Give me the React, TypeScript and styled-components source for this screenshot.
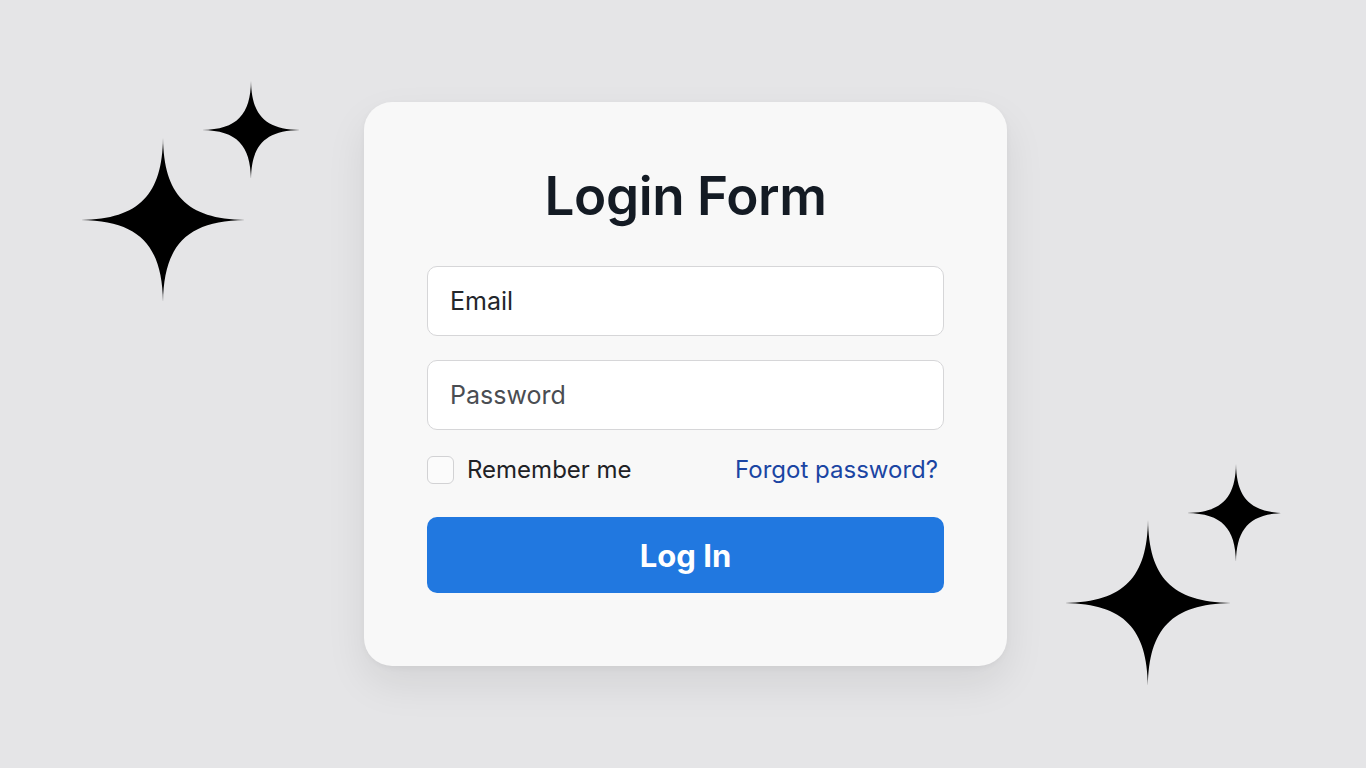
import React from 'react';
import styled, { createGlobalStyle } from 'styled-components';

const GlobalStyle = createGlobalStyle`
  html, body {
    margin: 0;
    padding: 0;
    background: #e5e5e7;
    font-family: Inter, "Noto Sans", sans-serif;
  }
`;

const Page = styled.div`
  position: relative;
  width: 100vw;
  height: 100vh;
  display: flex;
  align-items: center;
  justify-content: center;
  overflow: hidden;
`;

const Card = styled.div`
  width: 643px;
  height: 564px;
  box-sizing: border-box;
  margin-left: 5px;
  padding: 60px 63px 0;
  background: #f8f8f8;
  border-radius: 28px;
  box-shadow: 0 18px 40px rgba(0, 0, 0, 0.08), 0 2px 6px rgba(0, 0, 0, 0.04);
  display: flex;
  flex-direction: column;
`;

const Title = styled.h1`
  margin: 0 0 36px;
  text-align: center;
  font-size: 53px;
  line-height: 68px;
  font-weight: 600;
  color: #141b24;
  letter-spacing: -0.4px;
`;

const Field = styled.div<{ $muted?: boolean }>`
  height: 70px;
  box-sizing: border-box;
  border: 1px solid #d6d6d8;
  border-radius: 10px;
  background: #ffffff;
  display: flex;
  align-items: center;
  padding: 0 22px;
  font-size: 25px;
  color: ${(p) => (p.$muted ? '#4a4d52' : '#23262b')};
  margin-bottom: 24px;
`;

const OptionsRow = styled.div`
  display: flex;
  align-items: center;
  justify-content: space-between;
  margin-top: 1px;
  padding-right: 6px;
`;

const CheckLabel = styled.label`
  display: flex;
  align-items: center;
  gap: 13px;
  font-size: 24px;
  color: #1f2226;
`;

const Box = styled.span`
  width: 27px;
  height: 28px;
  box-sizing: border-box;
  border: 1.5px solid #d2d2d4;
  border-radius: 6px;
  background: #fbfbfb;
`;

const Link = styled.a`
  font-size: 24px;
  color: #1b45a3;
  text-decoration: none;
`;

const Button = styled.button`
  margin-top: 33px;
  height: 76px;
  border: none;
  border-radius: 10px;
  background: #2178e0;
  color: #ffffff;
  font-family: Inter, "Noto Sans", sans-serif;
  font-size: 31px;
  font-weight: 700;
  cursor: pointer;
`;

const Sparkle = styled.svg<{ $x: number; $y: number; $size: number }>`
  position: absolute;
  left: ${(p) => p.$x - p.$size / 2}px;
  top: ${(p) => p.$y - p.$size / 2}px;
  width: ${(p) => p.$size}px;
  height: ${(p) => p.$size}px;
`;

// four-point sparkle, concave sides
const Star = ({ x, y, size }: { x: number; y: number; size: number }) => (
  <Sparkle $x={x} $y={y} $size={size} viewBox="0 0 100 100">
    <path
      d="M50 0 C50.5 34 64 49.5 100 50 C64 50.5 50.5 66 50 100 C49.5 66 36 50.5 0 50 C36 49.5 49.5 34 50 0 Z"
      fill="#000"
    />
  </Sparkle>
);

export default function App() {
  return (
    <>
      <GlobalStyle />
      <Page>
        <Star x={163} y={220} size={164} />
        <Star x={251} y={130} size={98} />
        <Star x={1148} y={603} size={166} />
        <Star x={1236} y={513} size={98} />
        <Card>
          <Title>Login Form</Title>
          <Field>Email</Field>
          <Field $muted>Password</Field>
          <OptionsRow>
            <CheckLabel>
              <Box />
              Remember me
            </CheckLabel>
            <Link href="#">Forgot password?</Link>
          </OptionsRow>
          <Button>Log In</Button>
        </Card>
      </Page>
    </>
  );
}
